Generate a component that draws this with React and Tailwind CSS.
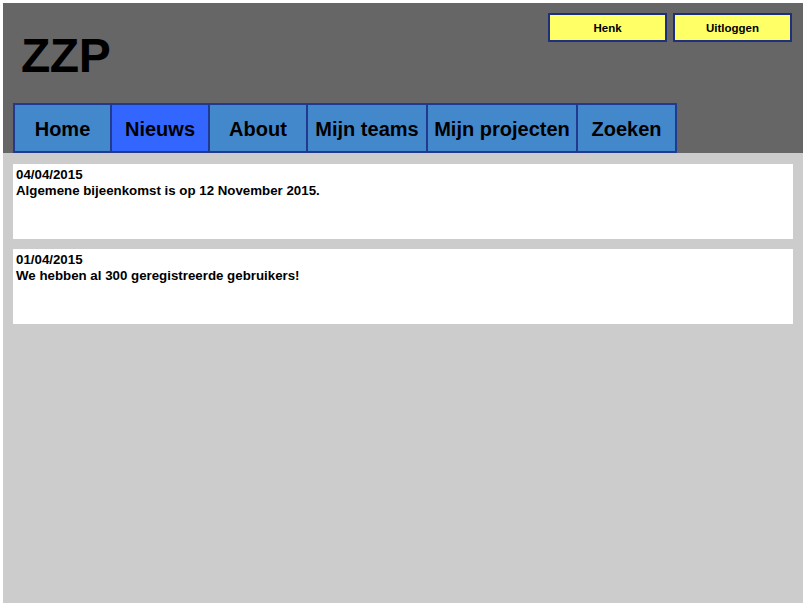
import React from 'react';

const tabs = [
  { label: 'Home', w: 'w-[99px] border-l-2' },
  { label: 'Nieuws', w: 'w-[98px]', active: true },
  { label: 'About', w: 'w-[98px]' },
  { label: 'Mijn teams', w: 'w-[120px]' },
  { label: 'Mijn projecten', w: 'w-[150px]' },
  { label: 'Zoeken', w: 'w-[99px]' },
];

const news = [
  { date: '04/04/2015', text: 'Algemene bijeenkomst is op 12 November 2015.' },
  { date: '01/04/2015', text: 'We hebben al 300 geregistreerde gebruikers!' },
];

const App = () => {
  return (
    <div className="min-h-screen bg-white pt-[3px] pl-[3px] font-['Liberation_Sans',Arial,sans-serif] font-bold text-black">
      <div className="w-[800px] h-[600px] flex flex-col bg-[#cccccc]">
        {/* Header */}
        <div className="bg-[#666666] h-[150px] flex flex-col">
          <div className="h-[100px] flex justify-between">
            <h1 className="text-[48px] leading-none pl-[18px] pt-[29px] tracking-[-0.5px]">ZZP</h1>
            <div className="flex gap-[6px] pt-[10px] pr-[11px] items-start">
              <button className="w-[119px] h-[29px] bg-[#ffff66] border-2 border-[#1f2f80] text-[11.5px] pt-[2px]">Henk</button>
              <button className="w-[119px] h-[29px] bg-[#ffff66] border-2 border-[#1f2f80] text-[11.5px] pt-[2px]">Uitloggen</button>
            </div>
          </div>

          {/* Nav */}
          <nav className="flex pl-[10px]">
            {tabs.map((t) => (
              <a
                key={t.label}
                href="#"
                className={`${t.w} h-[50px] flex items-center justify-center border-y-2 border-r-2 border-[#213a8f] text-[20px] pt-[1px] ${
                  t.active ? 'bg-[#3366ff]' : 'bg-[#4488cc]'
                }`}
              >
                {t.label}
              </a>
            ))}
          </nav>
        </div>

        {/* News */}
        <div className="flex flex-col gap-[10px] pt-[11px] px-[10px]">
          {news.map((n) => (
            <div key={n.date} className="bg-white h-[75px] pt-[3px] px-[3px] text-[13.3px] leading-[16px]">
              <div>{n.date}</div>
              <div>{n.text}</div>
            </div>
          ))}
        </div>
      </div>
    </div>
  );
};

export default App;
